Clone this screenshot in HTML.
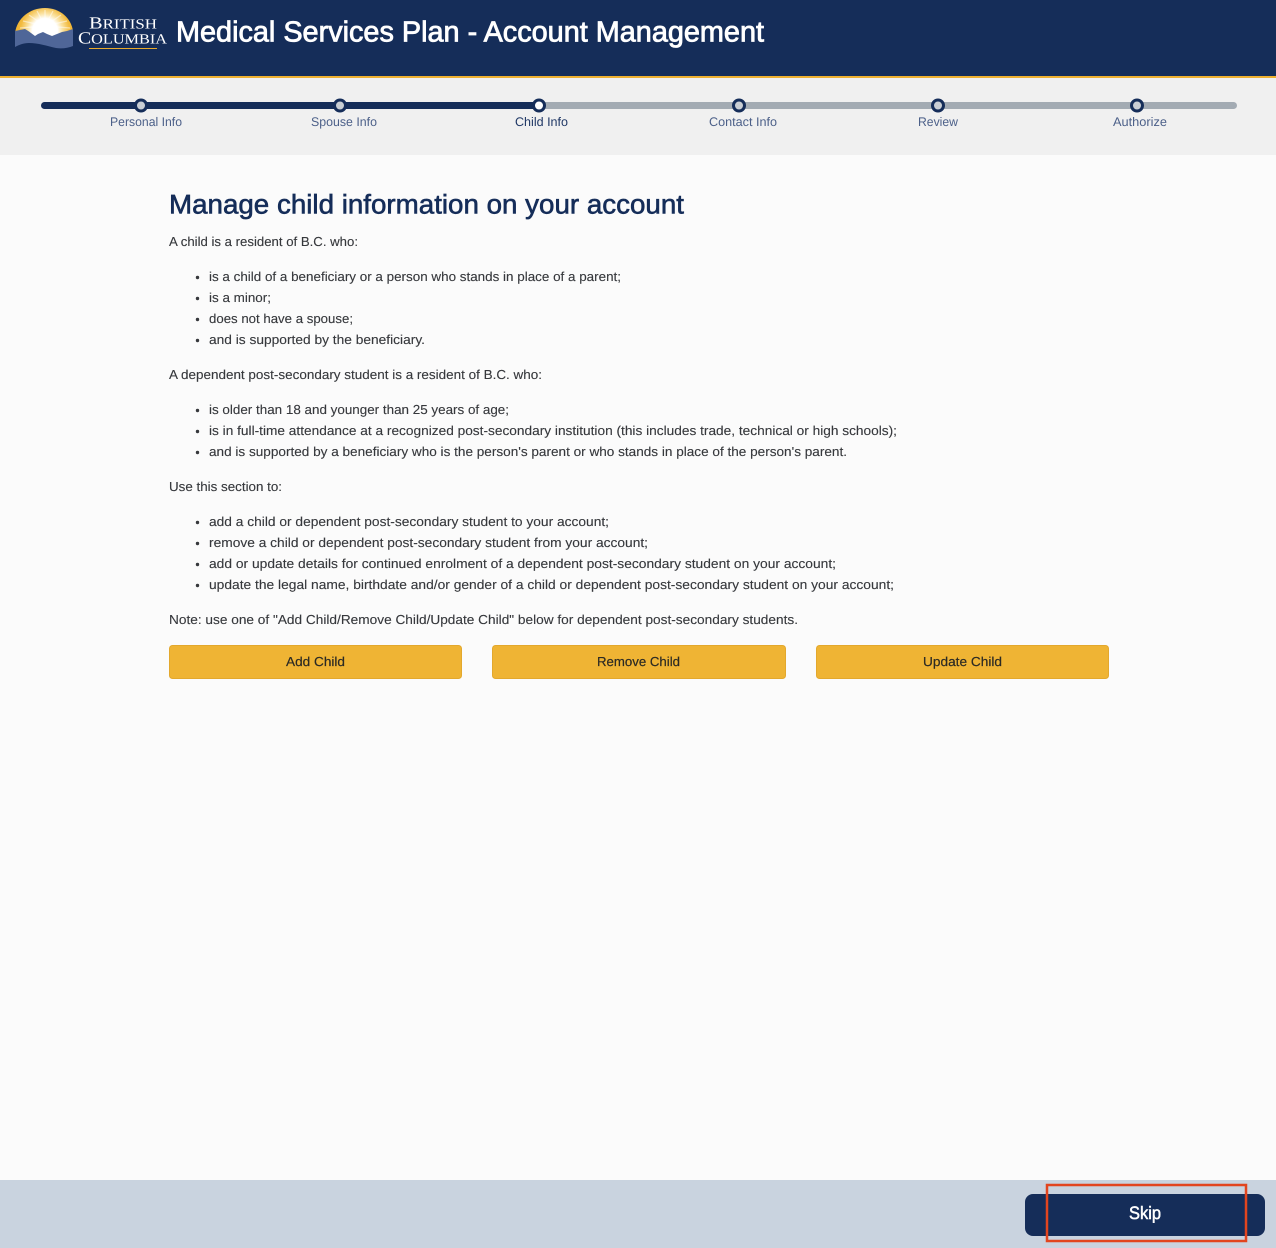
<!DOCTYPE html>
<html lang="en">
<head>
<meta charset="utf-8">
<title>Medical Services Plan - Account Management</title>
<style>
html,body{margin:0;padding:0;width:1276px;height:1248px;overflow:hidden;background:#fbfbfb}
svg{display:block;position:absolute;left:0;top:0}
text{font-family:"Liberation Sans",sans-serif;text-rendering:geometricPrecision}
.b{font-size:13px;fill:#36383c;stroke:#36383c;stroke-width:.12px}
.s{font-size:12.5px;fill:#4c6089}
.bt{font-size:13px;fill:#2b2a24;stroke:#2b2a24;stroke-width:.2px}
.lg{font-family:"Liberation Serif",serif;fill:#fff}
</style>
</head>
<body>
<svg width="1276" height="1248" viewBox="0 0 1276 1248" xmlns="http://www.w3.org/2000/svg">
<defs>
<radialGradient id="glow" cx="45" cy="31" r="30" gradientUnits="userSpaceOnUse"><stop offset=".42" stop-color="#fff"/><stop offset=".58" stop-color="#fbe4a6"/><stop offset=".82" stop-color="#f2bb40"/><stop offset="1" stop-color="#efb02c"/></radialGradient>
</defs>
<rect width="1276" height="1248" fill="#fbfbfb"/>
<!-- header -->
<rect width="1276" height="76" fill="#152d59"/>
<rect y="76" width="1276" height="2" fill="#eeb02f"/>
<!-- logo -->
<path d="M15 33C17 18 30 8 45 8C60 8 71 18 73 31L73 38L15 38Z" fill="url(#glow)"/>
<g stroke="#fff" stroke-width="1.200" opacity=".5"><path d="M45 26L45 10M45 26L37 11M45 26L53 11M45 26L29 15M45 26L61 15M45 26L23 21M45 26L67 21M45 26L20 28M45 26L70 28"/></g>
<path d="M15 31L25 29L29 31.500L35 36L38 34L43 32L47 34L52 36L57 34L62 32L67 31L73 29L73 46C68 48 62 49 56 48C47 46 38 43 29 43C23 43 19 45 15 47Z" fill="#4f6698"/>
<text class="lg" x="89" y="28.500" textLength="68" lengthAdjust="spacingAndGlyphs" style="font-size:14px"><tspan style="font-size:17px">B</tspan>RITISH</text>
<text class="lg" x="78" y="43.500" textLength="89" lengthAdjust="spacingAndGlyphs" style="font-size:14px"><tspan style="font-size:17px">C</tspan>OLUMBIA</text>
<rect x="89" y="48" width="68" height="1" fill="#e9aa2b"/>
<text x="176" y="41.500" textLength="588" lengthAdjust="spacingAndGlyphs" style="font-size:29px;fill:#fff;stroke:#fff;stroke-width:.8px">Medical Services Plan - Account Management</text>
<!-- progress band -->
<rect y="78" width="1276" height="77" fill="#f0f0f0"/>
<rect x="539" y="102" width="698" height="7" rx="3.500" fill="#a3abb3"/>
<rect x="41" y="102" width="498" height="7" rx="3.500" fill="#152d59"/>
<g stroke="#152d59" stroke-width="3">
<circle cx="141" cy="105.500" r="5.500" fill="#c9ced4"/>
<circle cx="340" cy="105.500" r="5.500" fill="#c9ced4"/>
<circle cx="539" cy="105.500" r="5.500" fill="#fff"/>
<circle cx="739" cy="105.500" r="5.500" fill="#c9ced4"/>
<circle cx="938" cy="105.500" r="5.500" fill="#c9ced4"/>
<circle cx="1137" cy="105.500" r="5.500" fill="#c9ced4"/>
</g>
<text class="s" x="110" y="126" textLength="72" lengthAdjust="spacingAndGlyphs">Personal Info</text>
<text class="s" x="311" y="126" textLength="66" lengthAdjust="spacingAndGlyphs">Spouse Info</text>
<text class="s" x="515" y="126" textLength="53" lengthAdjust="spacingAndGlyphs" style="fill:#1f3765">Child Info</text>
<text class="s" x="709" y="126" textLength="68" lengthAdjust="spacingAndGlyphs">Contact Info</text>
<text class="s" x="918" y="126" textLength="40" lengthAdjust="spacingAndGlyphs">Review</text>
<text class="s" x="1113" y="126" textLength="54" lengthAdjust="spacingAndGlyphs">Authorize</text>
<!-- heading -->
<text x="169" y="213.500" textLength="515" lengthAdjust="spacingAndGlyphs" style="font-size:27px;fill:#152d59;stroke:#152d59;stroke-width:.6px">Manage child information on your account</text>
<!-- body text -->
<text class="b" x="169" y="246" textLength="189" lengthAdjust="spacingAndGlyphs">A child is a resident of B.C. who:</text>
<text class="b" x="209" y="281" textLength="412" lengthAdjust="spacingAndGlyphs">is a child of a beneficiary or a person who stands in place of a parent;</text>
<text class="b" x="209" y="302" textLength="62" lengthAdjust="spacingAndGlyphs">is a minor;</text>
<text class="b" x="209" y="323" textLength="144" lengthAdjust="spacingAndGlyphs">does not have a spouse;</text>
<text class="b" x="209" y="344" textLength="216" lengthAdjust="spacingAndGlyphs">and is supported by the beneficiary.</text>
<text class="b" x="169" y="379" textLength="373" lengthAdjust="spacingAndGlyphs">A dependent post-secondary student is a resident of B.C. who:</text>
<text class="b" x="209" y="414" textLength="300" lengthAdjust="spacingAndGlyphs">is older than 18 and younger than 25 years of age;</text>
<text class="b" x="209" y="435" textLength="688" lengthAdjust="spacingAndGlyphs">is in full-time attendance at a recognized post-secondary institution (this includes trade, technical or high schools);</text>
<text class="b" x="209" y="456" textLength="638" lengthAdjust="spacingAndGlyphs">and is supported by a beneficiary who is the person's parent or who stands in place of the person's parent.</text>
<text class="b" x="169" y="491" textLength="113" lengthAdjust="spacingAndGlyphs">Use this section to:</text>
<text class="b" x="209" y="526" textLength="400" lengthAdjust="spacingAndGlyphs">add a child or dependent post-secondary student to your account;</text>
<text class="b" x="209" y="547" textLength="439" lengthAdjust="spacingAndGlyphs">remove a child or dependent post-secondary student from your account;</text>
<text class="b" x="209" y="568" textLength="627" lengthAdjust="spacingAndGlyphs">add or update details for continued enrolment of a dependent post-secondary student on your account;</text>
<text class="b" x="209" y="589" textLength="685" lengthAdjust="spacingAndGlyphs">update the legal name, birthdate and/or gender of a child or dependent post-secondary student on your account;</text>
<text class="b" x="169" y="624" textLength="629" lengthAdjust="spacingAndGlyphs">Note: use one of "Add Child/Remove Child/Update Child" below for dependent post-secondary students.</text>
<!-- bullets -->
<g fill="#36383c">
<circle cx="197.500" cy="277.500" r="1.700"/><circle cx="197.500" cy="298.500" r="1.700"/><circle cx="197.500" cy="319.500" r="1.700"/><circle cx="197.500" cy="340.500" r="1.700"/>
<circle cx="197.500" cy="410.500" r="1.700"/><circle cx="197.500" cy="431.500" r="1.700"/><circle cx="197.500" cy="452.500" r="1.700"/>
<circle cx="197.500" cy="522.500" r="1.700"/><circle cx="197.500" cy="543.500" r="1.700"/><circle cx="197.500" cy="564.500" r="1.700"/><circle cx="197.500" cy="585.500" r="1.700"/>
</g>
<!-- buttons -->
<g fill="#efb434" stroke="#e3a82d">
<rect x="169.500" y="645.500" width="292" height="33" rx="3"/>
<rect x="492.500" y="645.500" width="293" height="33" rx="3"/>
<rect x="816.500" y="645.500" width="292" height="33" rx="3"/>
</g>
<text class="bt" x="286" y="666" textLength="59" lengthAdjust="spacingAndGlyphs">Add Child</text>
<text class="bt" x="597" y="666" textLength="83" lengthAdjust="spacingAndGlyphs">Remove Child</text>
<text class="bt" x="923" y="666" textLength="79" lengthAdjust="spacingAndGlyphs">Update Child</text>
<!-- footer -->
<rect y="1180" width="1276" height="68" fill="#c9d3df"/>
<rect x="1025" y="1194" width="240" height="42" rx="8" fill="#152d59"/>
<text x="1129" y="1219" textLength="32" lengthAdjust="spacingAndGlyphs" style="font-size:18px;fill:#fff;stroke:#fff;stroke-width:.5px">Skip</text>
<rect x="1047" y="1185" width="199" height="56" fill="none" stroke="#e2451f" stroke-width="2.500"/>
</svg>
</body>
</html>
